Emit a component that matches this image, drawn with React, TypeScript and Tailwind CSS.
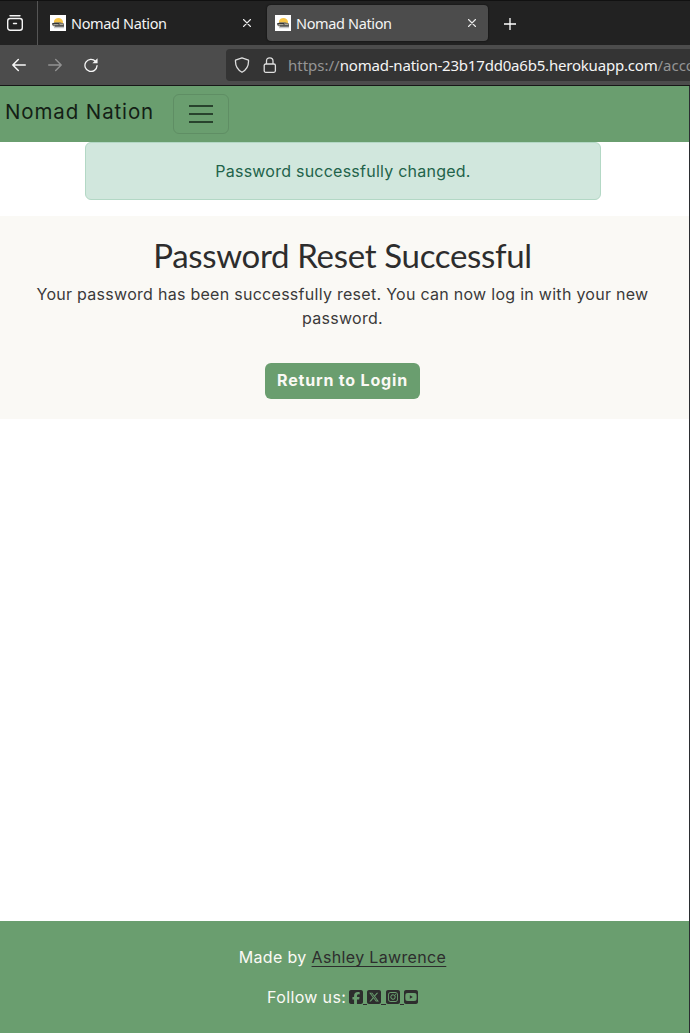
import { FaSquareFacebook, FaSquareInstagram, FaSquareXTwitter, FaSquareYoutube } from "react-icons/fa6";

function Favicon() {
  return (
    <svg width="16" height="16" viewBox="0 0 16 16" className="shrink-0">
      <rect width="16" height="16" fill="#fff" />
      <path d="M4 8V6Q5 3 8.500 3Q12 3 13 6.500V9H4z" fill="#f7c548" />
      <path d="M2 8.500L5 7.200H10L14 8.500V11.500H4L2 10z" fill="#77746c" />
      <path d="M2.500 8.500H9M5 11H14" stroke="#34363a" strokeWidth="1.200" />
      <path d="M4 9.600H8M10 9.500H13" stroke="#c2bdaf" strokeWidth=".7" />
      <path d="M4 12.700H14" stroke="#aaa" strokeWidth=".8" />
    </svg>
  );
}

function CloseIcon() {
  return (
    <svg width="8" height="8" viewBox="0 0 8 8" className="shrink-0" stroke="#ededed" strokeWidth="1.100" strokeLinecap="round">
      <path d="M.5 .5L7.500 7.500M7.500 .5L.5 7.500" />
    </svg>
  );
}

function Tabs() {
  return (
    <div className="flex h-[45px] shrink-0 border-t border-[#111] bg-[#222] font-['Noto_Sans',sans-serif] text-[14.500px] text-[#f4f4f4]">
      <div className="flex w-[38px] items-center border-r border-[#555] pl-[7px]">
        <svg width="16" height="16" viewBox="0 0 16 16" fill="none" stroke="#f5f5f5" strokeWidth="1.400" strokeLinecap="round">
          <path d="M3 .8H13M6.500 8.500H9.500" />
          <rect x=".7" y="3.500" width="14.600" height="11.800" rx="2.500" />
        </svg>
      </div>
      <div className="flex w-[229px] items-center pl-[12px] pr-[16px]">
        <Favicon />
        <span className="ml-[5px] flex-1 whitespace-nowrap tracking-[-0.36px]">Nomad Nation</span>
        <CloseIcon />
      </div>
      <div className="mt-[4px] flex h-[36px] w-[221px] items-center rounded-[4px] bg-[#4c4c4c] pl-[8px] pr-[12px] shadow-[0_0_2px_#080808]">
        <Favicon />
        <span className="ml-[5px] flex-1 whitespace-nowrap tracking-[-0.36px]">Nomad Nation</span>
        <CloseIcon />
      </div>
      <svg width="12" height="12" viewBox="0 0 12 12" className="ml-[15.500px] mt-[16.500px]" stroke="#fff" strokeWidth="1.300">
        <path d="M6 0V12M0 6H12" />
      </svg>
    </div>
  );
}

function AddressBar() {
  return (
    <div className="flex h-[41px] shrink-0 border-b border-[#171717] bg-[#4c4c4c]">
      <div className="flex h-[40px] w-[226px] items-center gap-[22px] pl-[12px]">
        <svg width="14" height="14" viewBox="0 0 14 14" fill="none" stroke="#f8f8f8" strokeWidth="1.500" strokeLinecap="round" strokeLinejoin="round">
          <path d="M13.300 7H.8M6.300 1.500L.8 7L6.300 12.500" />
        </svg>
        <svg width="14" height="14" viewBox="0 0 14 14" fill="none" stroke="#929292" strokeWidth="1.400" strokeLinecap="round" strokeLinejoin="round">
          <path d="M.7 7H13.200M7.700 1.500L13.200 7L7.700 12.500" />
        </svg>
        <svg width="14" height="14" viewBox="0 0 15 15" fill="none" stroke="#f5f5f5" strokeWidth="1.400">
          <path d="M12.300 3.500A6.500 6.500 0 1 0 14 8.200" strokeLinecap="round" />
          <path d="M14.500 .3V5.700H9z" fill="#f5f5f5" stroke="none" />
        </svg>
      </div>
      <div className="mt-[4px] flex h-[32px] flex-1 items-center overflow-hidden rounded-l-[4px] bg-[#343434] pl-[8px]">
        <svg width="16" height="16" viewBox="0 0 16 16" fill="none" stroke="#dedede" strokeWidth="1.300" strokeLinejoin="round" className="shrink-0">
          <path d="M8 .8L14.500 3.200Q15 11.500 8 15.300Q1 11.500 1.500 3.200z" />
        </svg>
        <svg width="14" height="16" viewBox="0 0 14 16" fill="none" stroke="#dedede" strokeWidth="1.300" className="ml-[13px] shrink-0">
          <rect x="1.200" y="7" width="11.200" height="8.300" rx="1.500" />
          <path d="M3.500 7V4Q3.500 .8 6.800 .8Q10 .8 10 4V7" />
        </svg>
        <div className="ml-[11px] whitespace-nowrap font-['Noto_Sans',sans-serif] text-[15px] text-[#949494]">
          https://<span className="tracking-[-0.2px] text-[#f5f5f5]">nomad-nation-23b17dd0a6b5.herokuapp.com</span>/accounts
        </div>
      </div>
    </div>
  );
}

function NavBar() {
  return (
    <nav className="flex h-[56px] shrink-0 items-center bg-[#6a9e6f] pl-[5px]">
      <span className="relative top-[-2px] w-[168px] whitespace-nowrap text-[20.500px] tracking-[0.880px] text-[#141f16]">Nomad Nation</span>
      <button aria-label="Toggle navigation" className="flex h-[40px] w-[56px] items-center justify-center rounded-[6px] border border-[#5f8e64]">
        <svg width="24" height="20" viewBox="0 0 24 20" stroke="#28422d" strokeWidth="2">
          <path d="M0 2H24M0 10H24M0 18H24" />
        </svg>
      </button>
    </nav>
  );
}

function UnderlinedGap() {
  return <span className="h-[16px] w-[4.250px] border-b border-[#2d2d2d]" />;
}

export default function App() {
  return (
    <div className="flex h-[1033px] w-[690px] flex-col overflow-hidden bg-white font-[Inter,sans-serif] text-[16px] leading-[24px]">
      <Tabs />
      <AddressBar />
      <div className="flex min-h-0 flex-1 flex-col border-r border-[#2b2d31]">
        <NavBar />
        <div role="alert" className="ml-[85px] flex h-[58px] w-[516px] shrink-0 items-center justify-center rounded-[6px] border border-[#b3d8c5] bg-[#d1e7dd] tracking-[0.240px] text-[#22634a]">
          Password successfully changed.
        </div>
        <main className="mt-[16px] flex h-[203px] shrink-0 flex-col items-center bg-[#faf9f5] pr-[4px] pt-[19px] text-center text-[#3a3a3a]">
          <h1 className="font-[Lato,sans-serif] text-[33px] leading-[40px] tracking-[-0.320px] text-[#2d2d2d]">Password Reset Successful</h1>
          <p className="mt-[7px] whitespace-nowrap tracking-[0.280px]">Your password has been successfully reset. You can now log in with your new<br />password.</p>
          <a className="mt-[33px] flex h-[36px] w-[155px] items-center justify-center whitespace-nowrap rounded-[6px] bg-[#6a9e6f] pb-[2px] font-bold tracking-[0.820px] text-[#faf9f5]">Return to Login</a>
        </main>
        <footer className="mt-auto flex h-[112px] shrink-0 flex-col items-center gap-[16px] bg-[#6a9e6f] pr-[4px] pt-[24px] text-[#faf9f5]">
          <p className="whitespace-nowrap tracking-[0.350px]">Made by <a className="text-[#2d2d2d] underline decoration-1 underline-offset-[3px]">Ashley Lawrence</a></p>
          <p className="flex h-[24px] items-center whitespace-nowrap">
            <span className="tracking-[0.350px]">Follow us:</span>
            <span className="ml-[3px] flex items-start text-[#2d2d2d]">
              <FaSquareFacebook viewBox="0 0 448 512" className="h-[16px] w-[14px]" />
              <UnderlinedGap />
              <FaSquareXTwitter viewBox="0 0 448 512" className="h-[16px] w-[14px]" />
              <UnderlinedGap />
              <FaSquareInstagram viewBox="0 0 448 512" className="h-[16px] w-[14px]" />
              <UnderlinedGap />
              <FaSquareYoutube viewBox="0 0 448 512" className="h-[16px] w-[14px]" />
            </span>
          </p>
        </footer>
      </div>
    </div>
  );
}
